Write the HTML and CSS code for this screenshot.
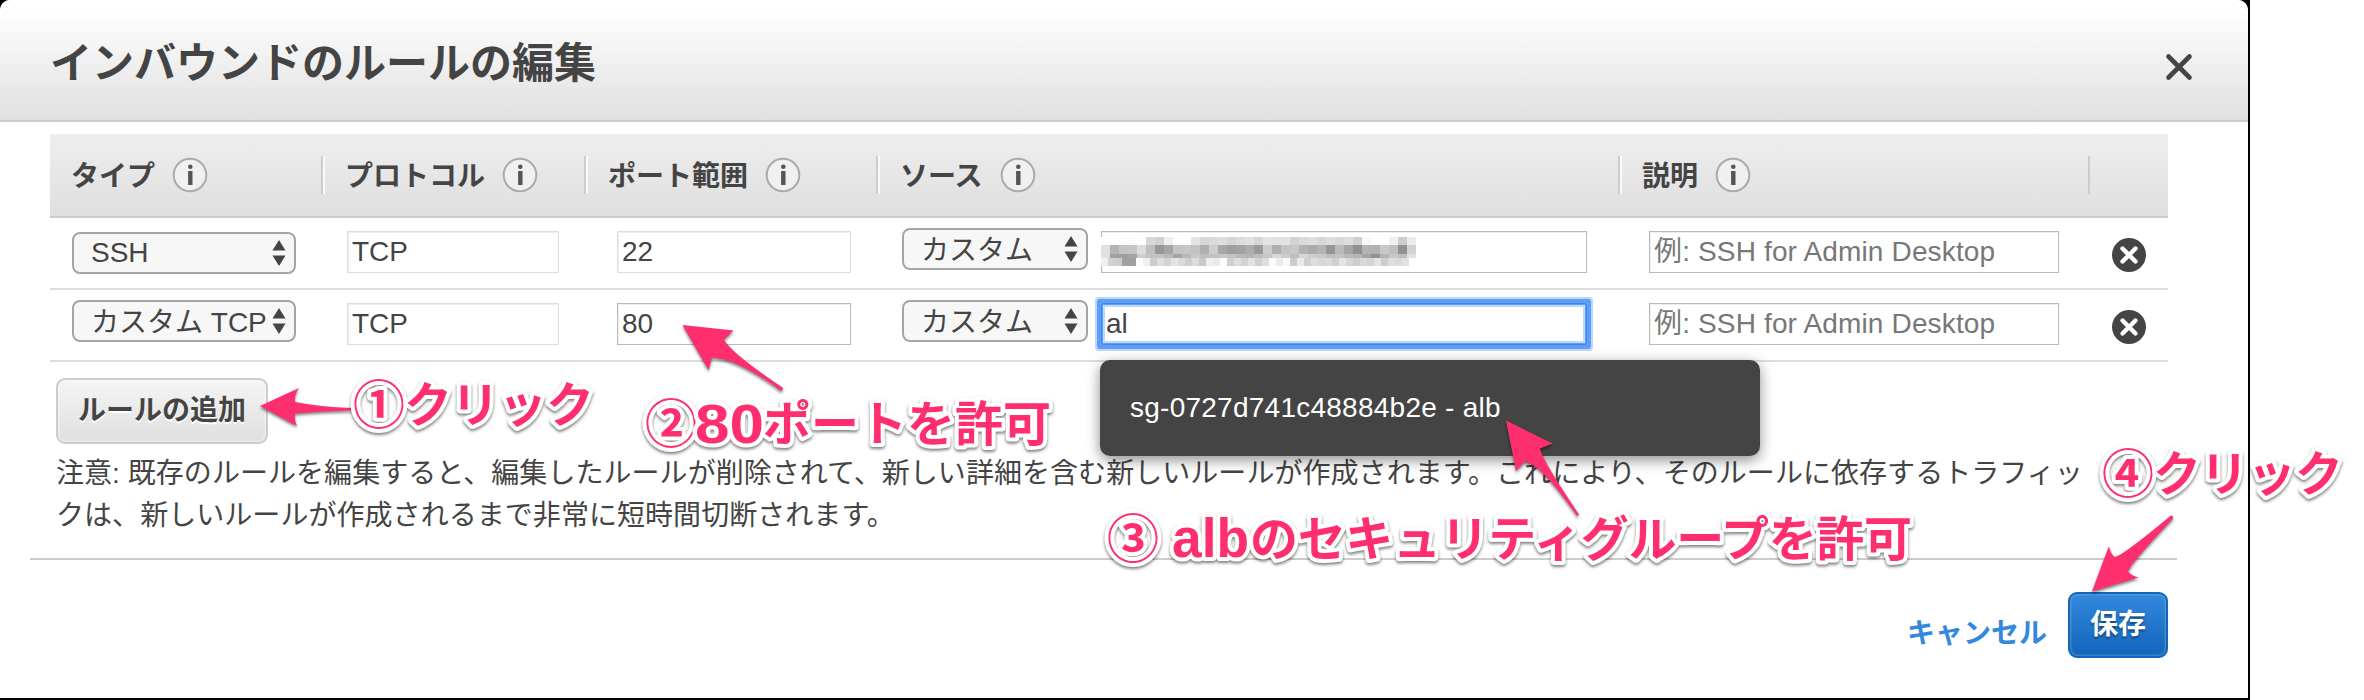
FILE: index.html
```html
<!DOCTYPE html>
<html lang="ja">
<head>
<meta charset="utf-8">
<title>インバウンドのルールの編集</title>
<link rel="stylesheet" href="styles.css">
</head>
<body>
<svg class="defs" width="0" height="0">
  <symbol id="info" viewBox="0 0 36 36"><circle cx="18" cy="18" r="16.300" fill="#f0f0f0" stroke="#aaa" stroke-width="2"/><circle cx="18.300" cy="9.800" r="2.300" fill="#555"/><rect x="16.100" y="14" width="4.400" height="14" fill="#555"/></symbol>
  <symbol id="del" viewBox="0 0 36 36"><circle cx="18" cy="18" r="17" fill="#444"/><path d="M11.500 11.500l13 13M24.500 11.500l-13 13" stroke="#fff" stroke-width="4.400" stroke-linecap="round"/></symbol>
  <symbol id="updown" viewBox="0 0 14 26"><path d="M7 0l6.500 10.500H.5zM.5 15.500h13L7 26z" fill="#444"/></symbol>
</svg>
<div class="frame">
<div class="dialog">
  <header class="head">
    <h1 class="title">インバウンドのルールの編集</h1>
    <svg class="close" width="28" height="28" viewBox="0 0 28 28"><path d="M3.500 3.500l21 21M24.500 3.500l-21 21" stroke="#444" stroke-width="4.600" stroke-linecap="round"/></svg>
  </header>
  <div class="table">
    <div class="row thead">
      <div class="th"><span>タイプ</span><svg class="icon"><use href="#info"/></svg></div>
      <div class="th sep"><span>プロトコル</span><svg class="icon"><use href="#info"/></svg></div>
      <div class="th sep"><span>ポート範囲</span><svg class="icon"><use href="#info"/></svg></div>
      <div class="th sep"><span>ソース</span><svg class="icon"><use href="#info"/></svg></div>
      <div class="th sep"><span>説明</span><svg class="icon"><use href="#info"/></svg></div>
      <div class="th sep last"></div>
    </div>
    <div class="row">
      <div class="cell type first"><div class="select"><span>SSH</span><svg class="ud"><use href="#updown"/></svg></div></div>
      <div class="cell proto"><div class="input ro">TCP</div></div>
      <div class="cell port"><div class="input ro">22</div></div>
      <div class="cell source"><div class="select"><span class="kana">カスタム</span><svg class="ud"><use href="#updown"/></svg></div><div class="input"><svg class="mosaic" id="mosaic" width="320" height="32"></svg></div></div>
      <div class="cell desc"><div class="input hint">例: SSH for Admin Desktop</div></div>
      <div class="cell act"><svg class="delete"><use href="#del"/></svg></div>
    </div>
    <div class="row">
      <div class="cell type"><div class="select"><span class="kana">カスタム TCP</span><svg class="ud"><use href="#updown"/></svg></div></div>
      <div class="cell proto"><div class="input ro">TCP</div></div>
      <div class="cell port"><div class="input">80</div></div>
      <div class="cell source"><div class="select"><span class="kana">カスタム</span><svg class="ud"><use href="#updown"/></svg></div><div class="input focus">al<div class="menu">sg-0727d741c48884b2e - alb</div></div></div>
      <div class="cell desc"><div class="input hint">例: SSH for Admin Desktop</div></div>
      <div class="cell act"><svg class="delete"><use href="#del"/></svg></div>
    </div>
  </div>
  <div class="add">ルールの追加</div>
  <p class="note">注意: 既存のルールを編集すると、編集したルールが削除されて、新しい詳細を含む新しいルールが作成されます。これにより、そのルールに依存するトラフィッ<br>クは、新しいルールが作成されるまで非常に短時間切断されます。</p>
  <footer class="foot"><span class="cancel">キャンセル</span><span class="save">保存</span></footer>
</div>
</div>
<svg class="notes" width="2364" height="700" viewBox="0 0 2364 700">
  <g class="arrows">
    <path d="M260 406L299 388Q294 395 295 402Q320 407 352 408V410.500Q320 411 295 413.500Q294 420 297 426Z"/>
    <path d="M682.500 325L733.500 330.500L724 339.500Q731 353 782.500 387.500Q783.500 390 781 391Q738 359 712 357.500L708.500 370Z"/>
    <path d="M1506 420.500L1552.500 443.500L1540 448.500Q1541 458 1579 514.500L1577 516Q1540 463 1524.500 461.500L1516 471Z"/>
    <path d="M2092 591.500L2109 546Q2110 553 2114.500 557Q2121 557 2171 515.500Q2173.500 515.500 2173 518.500Q2130 564 2128 571.500Q2132 576 2138.500 577.500Z"/>
  </g>
  <g class="labels">
    <text class="num" x="353" y="424">①</text><text x="404" y="422" textLength="190">クリック</text>
    <text class="num" x="645" y="443">②</text><text class="latin" x="695" y="443" textLength="69" lengthAdjust="spacingAndGlyphs">80</text><text x="763" y="441" textLength="288">ポートを許可</text>
    <text class="num" x="1107" y="558">③</text><text class="latin" x="1172" y="557" textLength="77" lengthAdjust="spacingAndGlyphs">alb</text><text x="1250" y="556" textLength="662">のセキュリティグループを許可</text>
    <text class="num" x="2102" y="493">④</text><text x="2153" y="491" textLength="190">クリック</text>
  </g>
</svg>
<script src="mosaic.js"></script>
</body>
</html>
```
FILE: styles.css
```css
* { box-sizing: border-box; }
html { height: 700px; overflow: hidden; }
body { margin: 0; width: 2364px; height: 700px; overflow: hidden; background: #fff; color: #444; font-family: "Liberation Sans", "Noto Sans CJK JP", sans-serif; font-size: 28px; }
.defs { position: absolute; }
.frame { width: 2250px; height: 700px; background: #000; }
.dialog { width: 2248px; height: 698px; background: #fff; border-radius: 10px 10px 0 0; overflow: hidden; }
.head { display: flex; justify-content: space-between; align-items: center; height: 122px; padding: 0 55px 0 50px; background: linear-gradient(#fff 8%, #e0e0e0); border-bottom: 2px solid #ccc; }
.title { margin: 0; padding-top: 8px; font-size: 42px; line-height: 60px; font-weight: 700; white-space: nowrap; }
.close { margin-top: 14px; }
.table { width: 2118px; margin: 12px 0 0 50px; }
.row { display: grid; grid-template-columns: 271px 263px 292px 742px 470px 80px; height: 72px; border-bottom: 2px solid #ddd; }
.thead { height: 84px; background: linear-gradient(#eee, #dfdfdf); border-color: #ccc; font-weight: 700; align-items: center; }
.th { display: flex; align-items: center; gap: 17px; height: 38px; padding-left: 21px; white-space: nowrap; }
.th span { margin-top: -2px; }
.th.sep { border-left: 2px solid #ccc; box-shadow: inset 2px 0 #fafafa; padding-left: 22px; }
.th.last { box-shadow: none; }
.icon { width: 36px; height: 36px; }
.cell { padding-top: 13px; display: flex; align-items: flex-start; }
.type { padding: 10px 0 0 22px; }
.first { padding-top: 14px; }
.proto { padding-left: 26px; }
.port { padding-left: 33px; }
.source { padding: 10px 0 0 26px; gap: 13px; }
.desc { padding-left: 31px; }
.act { padding: 19px 0 0 23px; }
.delete { width: 36px; height: 36px; }
.select { display: flex; justify-content: space-between; align-items: center; width: 224px; height: 42px; padding: 0 8px 0 17px; border: 2px solid #a5a5a5; border-radius: 8px; background: #f7f7f7; white-space: nowrap; line-height: 38px; }
.kana { padding-top: 3px; }
.source .select { width: 186px; }
.ud { width: 14px; height: 26px; margin-top: -1px; flex: none; }
.input { height: 42px; border: 1px solid #bbb; box-shadow: inset 1px 1px #eee; padding-left: 4px; line-height: 40px; white-space: nowrap; }
.ro { border-color: #ddd; }
.proto .input { width: 212px; }
.port .input { width: 234px; }
.source .input { width: 486px; margin-top: 3px; position: relative; }
.desc .input { width: 410px; }
.hint { color: #777; letter-spacing: .15px; }
.mosaic { display: block; margin: 5px 0 0 -5px; }
.source .focus { border: 1px solid #4384e4; box-shadow: inset 0 0 0 1px #5e9ef8, inset 0 0 0 3px #bcd8fb, 0 0 0 4px #5e9ef8, 0 0 0 6px #bcd8fb; border-radius: 1px; }
.menu { position: absolute; left: -2px; top: 56px; width: 660px; height: 96px; padding-left: 30px; border-radius: 10px; background: #444; color: #fff; line-height: 96px; letter-spacing: .25px; box-shadow: 0 4px 14px rgba(0,0,0,.45); }
.add { width: 212px; height: 66px; margin: 16px 0 0 56px; border: 2px solid #ccc; border-radius: 9px; background: linear-gradient(#f5f5f5, #dfdfdf); box-shadow: inset 0 0 3px #fff; text-shadow: 0 2px #fff; font-weight: 700; line-height: 62px; text-align: center; }
.note { margin: 9px 0 0 56px; line-height: 42px; letter-spacing: .05px; white-space: nowrap; }
.foot { display: flex; justify-content: flex-end; align-items: flex-start; gap: 21px; width: 2147px; margin: 21px 0 0 30px; padding: 32px 9px 0 0; border-top: 2px solid #ccc; font-weight: 700; }
.cancel { color: #38d; line-height: 42px; margin-top: 21px; }
.save { width: 100px; height: 66px; border: 2px solid #1165bb; border-radius: 9px; background: linear-gradient(#38d, #1166bb); box-shadow: inset 0 0 3px #8bc; color: #fff; text-shadow: 0 2px 2px rgba(0,0,0,.4); line-height: 62px; text-align: center; }
.notes { position: absolute; left: 0; top: 0; }
.arrows { fill: #ff2e6e; filter: drop-shadow(0 2px 1.5px rgba(0,0,0,.5)); }
.labels { fill: #ff2e6e; stroke: #fff; stroke-width: 8px; stroke-linejoin: round; paint-order: stroke; font: 700 48px "Noto Sans CJK JP", sans-serif; filter: drop-shadow(0 2px 1.5px rgba(0,0,0,.5)); }
.num { font-size: 52px; }
.latin { font: 700 56px "Liberation Sans", sans-serif; }
```
FILE: mosaic.js
```js
// Pixelated cover over the security group id: [top, height, block width, grey levels].
const rows = [
  [0, 8, 9, [255,255,252,252,255,215,208,238,255,255,228,215,218,222,213,220,225,215,228,226,226,210,218,222,215,222,216,222,208,248,255,255,240,205,235]],
  [8, 9, 9, [225,180,195,198,220,190,152,165,195,198,195,175,205,168,158,162,172,155,205,175,195,200,178,172,180,150,185,165,145,180,178,200,190,145,210]],
  [17, 4, 9, [225,160,158,165,205,195,195,185,165,185,200,190,195,200,195,185,180,190,200,215,205,190,215,205,200,190,195,185,180,165,145,180,200,190,225]],
  [21, 8, 7, [240,210,205,160,160,252,240,205,222,212,228,218,208,220,200,238,235,255,208,222,210,225,208,222,250,235,250,205,235,208,222,215,218,208,228,215,205,218,212,228,205,222,218,225]]
];
const svg = document.getElementById("mosaic");
for (const [y, h, w, tones] of rows) {
  tones.forEach((v, i) => {
    const r = document.createElementNS("http://www.w3.org/2000/svg", "rect");
    r.setAttribute("x", i * w);
    r.setAttribute("y", y);
    r.setAttribute("width", w);
    r.setAttribute("height", h);
    r.setAttribute("fill", `rgb(${v},${v},${v})`);
    svg.appendChild(r);
  });
}
```
